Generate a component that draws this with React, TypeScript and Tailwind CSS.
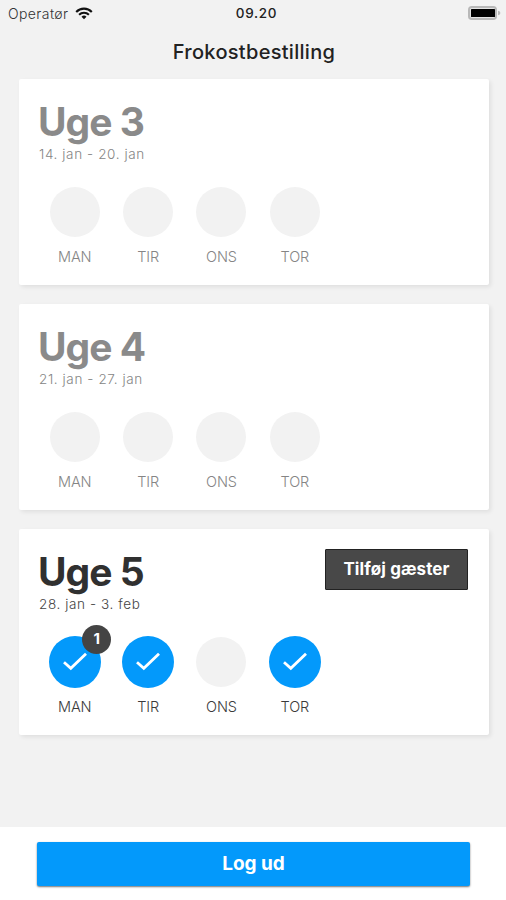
type Day = { label: string; checked?: boolean; guests?: number };
type Week = { title: string; range: string; active?: boolean; days: Day[] };

const weeks: Week[] = [
  {
    title: "Uge 3",
    range: "14. jan - 20. jan",
    days: [{ label: "MAN" }, { label: "TIR" }, { label: "ONS" }, { label: "TOR" }],
  },
  {
    title: "Uge 4",
    range: "21. jan - 27. jan",
    days: [{ label: "MAN" }, { label: "TIR" }, { label: "ONS" }, { label: "TOR" }],
  },
  {
    title: "Uge 5",
    range: "28. jan - 3. feb",
    active: true,
    days: [
      { label: "MAN", checked: true, guests: 1 },
      { label: "TIR", checked: true },
      { label: "ONS" },
      { label: "TOR", checked: true },
    ],
  },
];

function StatusBar() {
  return (
    <div className="grid h-[26px] grid-cols-3 items-center pl-2 pr-[5px] text-[13.5px] text-[#222]">
      <div className="flex items-center gap-[7px]">
        <span className="pt-px text-[14px] font-light tracking-[0.4px] text-[#333]">Operatør</span>
        <svg width="18" height="13" viewBox="0 0 18 13" fill="none" stroke="#111" strokeWidth="2.1">
          <path d="M1.2 4.9 A11 11 0 0 1 16.8 4.9" />
          <path d="M4.1 7.8 A7 7 0 0 1 13.9 7.8" />
          <path d="M9 12.2 L6.5 9.7 A3.6 3.6 0 0 1 11.5 9.7 Z" fill="#111" stroke="none" />
        </svg>
      </div>
      <span className="pt-px pl-1 text-center font-medium tracking-[0.7px]">09.20</span>
      <svg className="justify-self-end" width="34" height="14" viewBox="0 0 34 14">
        <rect x="2" y="1" width="27" height="12" rx="2.8" fill="#e4e4e4" stroke="#b8b8b8" strokeWidth="2" />
        <rect x="4" y="3" width="24" height="8" rx="0.6" fill="#000" />
        <path d="M31 4.8 Q33.4 5.2 33.4 7 Q33.4 8.8 31 9.2 Z" fill="#b8b8b8" />
      </svg>
    </div>
  );
}

function DayCircle({ day, active }: { day: Day; active?: boolean }) {
  return (
    <div className="flex w-[73.4px] flex-col items-center">
      <div className="relative flex h-[52px] items-center justify-center">
        {day.checked ? (
          <div className="flex h-[52px] w-[52px] items-center justify-center rounded-full bg-[#0399fb]">
            <svg width="26" height="20" viewBox="0 0 26 20" fill="none" stroke="#fff" strokeWidth="2.8">
              <path d="M2 10.2 L8.8 16.3 L24 1.7" />
            </svg>
          </div>
        ) : (
          <div className="h-[50px] w-[50px] rounded-full bg-[#f2f2f2]" />
        )}
        {day.guests && (
          <span className="absolute -top-[11px] left-[33.5px] flex h-[29px] w-[29px] items-center justify-center rounded-full bg-[#444] pt-px text-[15px] font-bold text-white">
            {day.guests}
          </span>
        )}
      </div>
      <span
        className={`mt-[9.5px] text-[14.5px] leading-5 font-light tracking-[-0.1px] ${active ? "text-[#3a3a3a]" : "text-[#858585]"}`}
      >
        {day.label}
      </span>
    </div>
  );
}

function WeekCard({ week }: { week: Week }) {
  return (
    <section className="h-[206px] rounded-[2px] bg-white pt-5 pr-[21px] pl-5 shadow-[2px_2px_4px_rgba(0,0,0,0.08)]">
      <div className="flex h-[86.5px] items-start justify-between">
        <div>
          <h2
            className={`-ml-[1px] text-[39px] leading-[46px] font-bold tracking-[-0.95px] ${week.active ? "text-[#303030]" : "text-[#8a8a8a]"}`}
          >
            {week.title}
          </h2>
          <p
            className={`text-[13.5px] leading-[18px] font-light tracking-[0.6px] ${week.active ? "text-[#444]" : "text-[#858585]"}`}
          >
            {week.range}
          </p>
        </div>
        {week.active && (
          <button className="h-[41px] w-[143px] rounded-[1px] border border-[#222] bg-[#484848] text-[17px] font-bold tracking-[0.1px] text-white">
            Tilføj gæster
          </button>
        )}
      </div>
      <div className="-ml-[1px] flex">
        {week.days.map((day) => (
          <DayCircle key={day.label} day={day} active={week.active} />
        ))}
      </div>
    </section>
  );
}

export default function App() {
  return (
    <div className="flex h-[900px] w-[506px] flex-col bg-[#f2f2f2] font-['Inter',sans-serif]">
      <StatusBar />
      <header className="flex h-[53px] items-center justify-center pb-[2px] pl-0.5 text-[20px] font-medium tracking-[0.3px] text-[#222]">
        <h1>Frokostbestilling</h1>
      </header>
      <main className="flex flex-1 flex-col gap-[19px] pr-[17px] pl-[19px]">
        {weeks.map((week) => (
          <WeekCard key={week.title} week={week} />
        ))}
      </main>
      <footer className="h-[73px] bg-white pt-[15px] pr-[36px] pl-[37px]">
        <button className="h-[44px] w-full rounded-[2px] bg-[#0399fb] pt-px text-[19px] font-bold text-white shadow-[0_1px_2px_rgba(0,0,0,0.55)]">
          Log ud
        </button>
      </footer>
    </div>
  );
}
